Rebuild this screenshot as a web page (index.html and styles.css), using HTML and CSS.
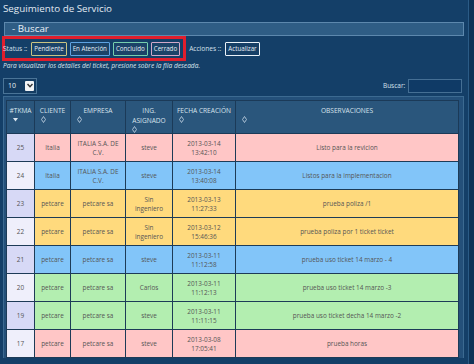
FILE: index.html
```html
<!DOCTYPE html>
<html lang="es">
<head>
    <meta charset="UTF-8">
    <title>Seguimiento de Servicio</title>
    <link rel="stylesheet" href="styles.css">
</head>
<body>
    <div class="page">
        <div class="title">Seguimiento de Servicio</div>
        <div class="search-bar">- Buscar</div>

        <!-- Filtros de estado -->
        <div class="toolbar">
            <div class="status-group">
                <span class="label">Status ::</span>
                <button class="btn btn-pend">Pendiente</button>
                <button class="btn btn-aten">En Atención</button>
                <button class="btn btn-conc">Concluido</button>
                <button class="btn btn-cerr">Cerrado</button>
            </div>
            <span class="label">Acciones ::</span>
            <button class="btn btn-act">Actualizar</button>
        </div>
        <p class="hint">Para visualizar los detalles del ticket, presione sobre la fila deseada.</p>

        <div class="table-controls">
            <div class="length">
                <span>10</span>
                <span class="length-arrow">
                    <svg width="6" height="5" viewBox="0 0 6 5"><path d="M0.5 1 L3 3.8 L5.5 1" fill="none" stroke="#333" stroke-width="1.4"/></svg>
                </span>
            </div>
            <label class="filter">Buscar: <input type="text"></label>
        </div>

        <div class="table-panel">
            <table class="tickets">
                <thead>
                    <tr>
                        <th class="c-id">#TKMA<span class="sort"><svg width="5" height="4" viewBox="0 0 5 4"><path d="M0 0 L5 0 L2.5 3.5 Z" fill="#dbe6f0"/></svg></span></th>
                        <th class="c-cli">CLIENTE<span class="sort"><svg width="5" height="7" viewBox="0 0 5 7"><path d="M2.5 0.5 L4.5 3.5 L2.5 6.5 L0.5 3.5 Z" fill="none" stroke="#b9cbdb" stroke-width="0.9"/></svg></span></th>
                        <th class="c-emp">EMPRESA<span class="sort"><svg width="5" height="7" viewBox="0 0 5 7"><path d="M2.5 0.5 L4.5 3.5 L2.5 6.5 L0.5 3.5 Z" fill="none" stroke="#b9cbdb" stroke-width="0.9"/></svg></span></th>
                        <th class="c-ing">ING.<br>ASIGNADO<span class="sort"><svg width="5" height="7" viewBox="0 0 5 7"><path d="M2.5 0.5 L4.5 3.5 L2.5 6.5 L0.5 3.5 Z" fill="none" stroke="#b9cbdb" stroke-width="0.9"/></svg></span></th>
                        <th class="c-fec">FECHA CREACIÓN<span class="sort"><svg width="5" height="7" viewBox="0 0 5 7"><path d="M2.5 0.5 L4.5 3.5 L2.5 6.5 L0.5 3.5 Z" fill="none" stroke="#b9cbdb" stroke-width="0.9"/></svg></span></th>
                        <th class="c-obs">OBSERVACIONES<span class="sort"><svg width="5" height="7" viewBox="0 0 5 7"><path d="M2.5 0.5 L4.5 3.5 L2.5 6.5 L0.5 3.5 Z" fill="none" stroke="#b9cbdb" stroke-width="0.9"/></svg></span></th>
                    </tr>
                </thead>
                <tbody>
                    <tr class="row-cerrado odd">
                        <td>25</td><td>Italia</td><td>ITALIA S.A. DE C.V.</td><td>steve</td><td>2013-03-14<br>13:42:10</td><td>Listo para la revicion</td>
                    </tr>
                    <tr class="row-atencion even">
                        <td>24</td><td>Italia</td><td>ITALIA S.A. DE C.V.</td><td>steve</td><td>2013-03-14<br>13:40:08</td><td>Listos para la implementacion</td>
                    </tr>
                    <tr class="row-pendiente odd">
                        <td>23</td><td>petcare</td><td>petcare sa</td><td>Sin<br>ingeniero</td><td>2013-03-13<br>11:27:33</td><td>prueba poliza /1</td>
                    </tr>
                    <tr class="row-pendiente even">
                        <td>22</td><td>petcare</td><td>petcare sa</td><td>Sin<br>ingeniero</td><td>2013-03-12<br>15:46:36</td><td>prueba poliza por 1 ticket ticket</td>
                    </tr>
                    <tr class="row-atencion odd">
                        <td>21</td><td>petcare</td><td>petcare sa</td><td>steve</td><td>2013-03-11<br>11:12:58</td><td>prueba uso ticket 14 marzo - 4</td>
                    </tr>
                    <tr class="row-concluido even">
                        <td>20</td><td>petcare</td><td>petcare sa</td><td>Carlos</td><td>2013-03-11<br>11:12:13</td><td>prueba uso ticket 14 marzo -3</td>
                    </tr>
                    <tr class="row-concluido odd">
                        <td>19</td><td>petcare</td><td>petcare sa</td><td>steve</td><td>2013-03-11<br>11:11:15</td><td>prueba uso ticket decha 14 marzo -2</td>
                    </tr>
                    <tr class="row-cerrado even">
                        <td>17</td><td>petcare</td><td>petcare sa</td><td>steve</td><td>2013-03-08<br>17:05:41</td><td>prueba horas</td>
                    </tr>
                </tbody>
            </table>
        </div>
    </div>
</body>
</html>
```

FILE: styles.css
```css
body {
    margin: 0;
    padding: 0;
    background: #0e3357;
    font-family: 'Open Sans', 'DejaVu Sans', sans-serif;
    color: #dde7f0;
    overflow: hidden;
    height: 364px;
}

.page {
    width: 468px;
    height: 364px;
    background: #143f68;
    border-right: 1px solid #2b5b86;
}

.title {
    height: 22px;
    line-height: 17px;
    padding-left: 3px;
    font-size: 9.8px;
    color: #e2eaf2;
}

/* Barra de busqueda */
.search-bar {
    margin: 0 4px 0 4px;
    height: 12px;
    line-height: 12px;
    padding: 0 0 0 7px;
    background: #2f5d85;
    border: 1px solid #5d88ad;
    font-size: 9.8px;
    color: #e9f0f6;
}

.toolbar {
    display: flex;
    align-items: center;
    height: 25px;
    margin-left: 2px;
    gap: 3px;
}

.status-group {
    display: flex;
    align-items: center;
    gap: 3px;
    height: 19px;
    padding: 0 3px 0 0;
    border: 3px solid #e01e2c;
}

.label {
    font-size: 6.6px;
    color: #d8e2ec;
    margin-right: 1px;
}

.status-group .label {
    margin-left: -2px;
}

.btn {
    height: 14px;
    padding: 0 2px;
    background: #1b4368;
    border: 1px solid #aaa;
    border-radius: 1px;
    color: #e6eef5;
    font-family: 'Open Sans', 'DejaVu Sans', sans-serif;
    font-size: 6.2px;
    line-height: 11px;
    cursor: pointer;
}

.btn-pend { border-color: #c9c482; }
.btn-aten { border-color: #5ea3e2; }
.btn-conc { border-color: #76cfae; }
.btn-cerr { border-color: #d1a8c9; }
.btn-act  { border-color: #e9f1f8; background: #163f66; }

.hint {
    margin: 0;
    padding-left: 3px;
    height: 15px;
    line-height: 10px;
    font-size: 6.6px;
    font-style: italic;
    color: #dbe5ee;
}

.table-controls {
    display: flex;
    justify-content: space-between;
    align-items: center;
    height: 19px;
    padding: 0 6px 0 3px;
}

.length {
    display: flex;
    align-items: center;
    justify-content: space-between;
    width: 26px;
    height: 14px;
    padding: 0 2px 0 4px;
    background: #143c62;
    border: 1px solid #4a7497;
    font-size: 7px;
    color: #e6eef5;
}

.length-arrow {
    display: flex;
    align-items: center;
    justify-content: center;
    width: 9px;
    height: 10px;
    background: #f2f4f6;
    border-radius: 1px;
}

.filter {
    font-size: 6.5px;
    color: #d6e1eb;
}

.filter input {
    width: 52px;
    height: 12px;
    padding: 0;
    margin: 0 0 0 1px;
    background: #0f3a66;
    border: 1px solid #456f94;
    vertical-align: middle;
}

/* Tabla de tickets */
.table-panel {
    margin: 1px 4px 0 3px;
    padding: 3px 5px 0 2px;
    background: #24507a;
    border: 1px solid #3c6a91;
    border-bottom: none;
}

.tickets {
    border-collapse: collapse;
    width: 453px;
    table-layout: fixed;
}

.tickets th {
    height: 25px;
    padding: 5px 0 0 0;
    vertical-align: top;
    background: #2a567c;
    border: 1px solid #1b3a58;
    font-weight: normal;
    font-size: 6.6px;
    line-height: 10px;
    color: #d8e3ed;
    text-align: center;
}

.sort {
    display: block;
    text-align: left;
    padding-left: 6px;
    line-height: 7px;
    height: 7px;
}

.c-id  { width: 27px; }
.c-cli { width: 35px; }
.c-emp { width: 54px; }
.c-ing { width: 46px; }
.c-fec { width: 62px; }

.tickets td {
    height: 27px;
    padding: 0 2px;
    border: 1px solid #1d3b57;
    font-size: 6.4px;
    line-height: 9px;
    color: #555;
    text-align: center;
}

.row-cerrado td   { background: #ffc6c6; }
.row-atencion td  { background: #82c5f9; }
.row-pendiente td { background: #ffda7d; }
.row-concluido td { background: #b3eeb0; }

.tickets tr.odd td:first-child  { background: #d7d9f6; }
.tickets tr.even td:first-child { background: #efeffb; }
```
